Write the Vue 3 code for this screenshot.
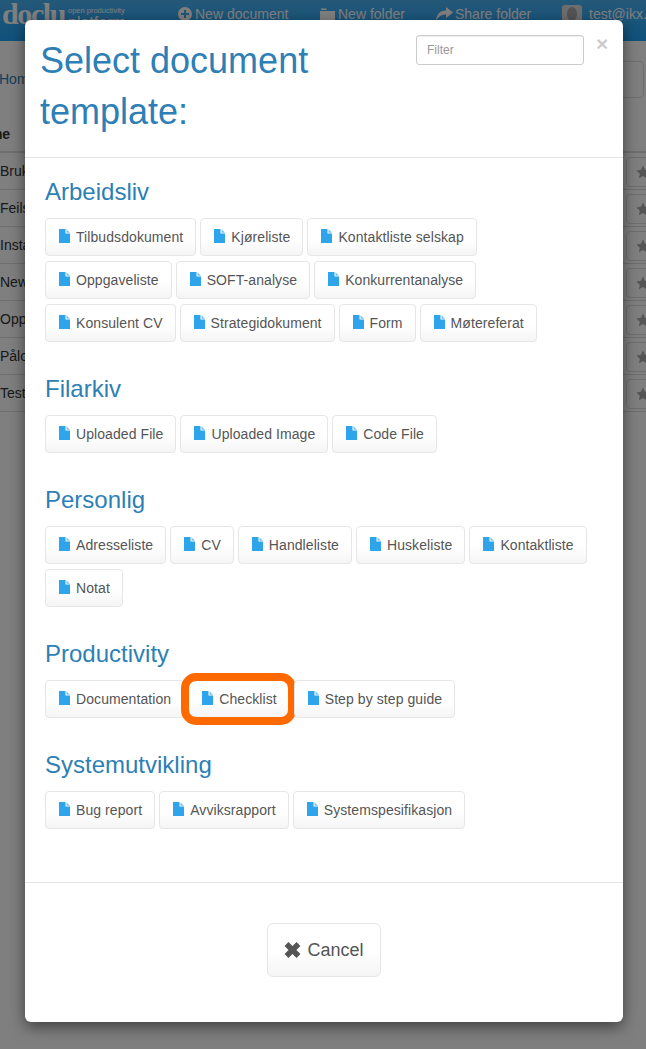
<script setup>
const rows = ['Brukerveiledning', 'Feilsøking', 'Installasjon', 'New document', 'Oppgaver', 'Pålogging', 'Testdokument']
const sections = [
  { title: 'Arbeidsliv', items: ['Tilbudsdokument', 'Kjøreliste', 'Kontaktliste selskap', 'Oppgaveliste', 'SOFT-analyse', 'Konkurrentanalyse', 'Konsulent CV', 'Strategidokument', 'Form', 'Møtereferat'] },
  { title: 'Filarkiv', items: ['Uploaded File', 'Uploaded Image', 'Code File'] },
  { title: 'Personlig', items: ['Adresseliste', 'CV', 'Handleliste', 'Huskeliste', 'Kontaktliste', 'Notat'] },
  { title: 'Productivity', items: ['Documentation', 'Checklist', 'Step by step guide'] },
  { title: 'Systemutvikling', items: ['Bug report', 'Avviksrapport', 'Systemspesifikasjon'] },
]
</script>

<template>
  <div class="root">
    <header class="nav">
      <div class="logo">doclu</div>
      <div class="tag">
        <span class="tag-a">open productivity</span>
        <span class="tag-b">platform</span>
      </div>
      <div class="nav-item first">
        <svg class="nav-ico" width="14" height="14" viewBox="0 0 14 14"><path fill-rule="evenodd" d="M7 0a7 7 0 1 1 0 14A7 7 0 0 1 7 0zM6 3v3H3v2h3v3h2V8h3V6H8V3z" fill="#fff"/></svg>
        <span>New document</span>
      </div>
      <div class="nav-item second">
        <svg class="nav-ico" width="15" height="15" viewBox="0 0 15 15"><path d="M1 1.500h5l1 1.500H1zM0 4h15v11H0z" fill="#fff"/></svg>
        <span>New folder</span>
      </div>
      <div class="nav-item third">
        <svg class="nav-ico" width="17" height="14" viewBox="0 0 17 14"><path d="M10 0l7 5.500L10 11V7.500C5.500 7.500 2.500 9.500 0 14c.5-6.500 4-10.500 10-10.500z" fill="#fff"/></svg>
        <span>Share folder</span>
      </div>
      <div class="nav-item user">
        <div class="avatar">
          <svg width="20" height="23" viewBox="0 0 20 23"><ellipse cx="10" cy="9" rx="5" ry="7" fill="#a8a8a8"/><path d="M2 23c0-5 4-7 8-7s8 2 8 7z" fill="#a8a8a8"/></svg>
        </div>
        <span>test@ikx.org</span>
      </div>
    </header>

    <main class="page">
      <div class="crumbs">
        <a class="home">Home</a>
        <div class="search-box"></div>
      </div>
      <div class="thead"><b class="th">Name</b></div>
      <div v-for="r in rows" :key="r" class="row">
        <span class="cell">{{ r }}</span>
        <span class="star-btn">
          <svg width="14" height="14" viewBox="0 0 24 24"><path d="M12 1l3.400 7.300 7.900 1-5.800 5.500 1.500 7.900L12 18.800l-7 3.900 1.500-7.900L.700 9.300l7.900-1z" fill="#aaa"/></svg>
        </span>
      </div>
    </main>

    <div class="backdrop"></div>

    <section class="modal">
      <div class="m-head">
        <h1 class="m-title">Select document template:</h1>
        <input class="filter" type="text" placeholder="Filter" />
        <span class="close">×</span>
      </div>

      <div class="m-body">
        <div v-for="s in sections" :key="s.title" class="group">
          <h3 class="group-title">{{ s.title }}</h3>
          <div class="btns">
            <button v-for="i in s.items" :key="i" class="doc-btn" :class="{ marked: i === 'Checklist' }" type="button">
              <svg class="doc-ico" width="11" height="14" viewBox="0 0 11 14">
                <path d="M0 0h6.500v4.500H11V14H0z" fill="#2ea5ea"/>
                <path d="M7.500 0.300L11 3.700H7.500z" fill="#7cc3ee"/>
              </svg>
              <span>{{ i }}</span>
            </button>
          </div>
        </div>
      </div>

      <div class="m-foot">
        <button class="cancel" type="button">
          <svg width="17" height="16" viewBox="0 0 16 16"><path d="M2 2l12 12M14 2L2 14" stroke="#555" stroke-width="5.500" fill="none"/></svg>
          <span>Cancel</span>
        </button>
      </div>
    </section>
  </div>
</template>

<style>
html, body { margin: 0; padding: 0; }
body { overflow: hidden; }
</style>

<style scoped>
.root {
  position: relative;
  width: 646px;
  height: 1049px;
  overflow: hidden;
  background: #fff;
  font-family: "Liberation Sans", Arial, sans-serif;
  font-size: 14px;
  line-height: 20px;
  color: #333;
}

/* Page behind the dialog */
.nav {
  display: flex;
  align-items: flex-start;
  height: 41px;
  background: linear-gradient(#4ab0f0, #1ea4fa);
  color: #fff;
  white-space: nowrap;
  overflow: hidden;
}
.logo {
  flex: none;
  margin-left: 2px;
  width: 64px;
  font-family: "Liberation Serif", serif;
  font-weight: 700;
  font-size: 30px;
  line-height: 28px;
  letter-spacing: -1.400px;
  color: #fff;
}
.tag { flex: none; display: flex; flex-direction: column; width: 110px; margin-left: 2px; }
.tag-a { font-size: 7.500px; line-height: 10px; margin-top: 6px; }
.tag-b { font-size: 16px; line-height: 14px; }
.nav-item { flex: none; display: flex; align-items: center; height: 28px; gap: 3px; }
.nav-ico { flex: none; }
.first { width: 142px; }
.second { width: 116px; }
.third { width: 126px; gap: 2px; }
.user { gap: 7px; }
.avatar {
  width: 20px;
  height: 23px;
  margin-top: 5px;
  border-radius: 3px;
  background: #ddd;
  overflow: hidden;
}

.crumbs { display: flex; justify-content: flex-end; height: 37px; margin-top: 20px; position: relative; }
.home { position: absolute; left: -1px; top: 8px; color: #2980b9; }
.search-box {
  width: 60px;
  height: 35px;
  margin-right: 2px;
  border: 1px solid #ddd;
  border-radius: 4px;
}
.thead {
  height: 55px;
  box-sizing: border-box;
  padding-top: 26px;
  border-bottom: 2px solid #ddd;
}
.th { display: block; margin-left: -28px; }
.row {
  display: flex;
  justify-content: space-between;
  height: 37px;
  box-sizing: border-box;
  padding-top: 4px;
  border-bottom: 1px solid #ddd;
}
.cell { line-height: 28px; }
.star-btn {
  display: flex;
  align-items: center;
  width: 40px;
  height: 30px;
  box-sizing: border-box;
  margin-right: -20px;
  padding-left: 9px;
  border: 1px solid #ddd;
  border-radius: 4px;
}

.backdrop {
  position: absolute;
  inset: 0;
  background: rgba(0, 0, 0, .5);
}

/* Dialog */
.modal {
  position: absolute;
  top: 20px;
  left: 25px;
  width: 598px;
  height: 1002px;
  background: #fff;
  border-radius: 6px;
  box-shadow: 0 5px 15px rgba(0, 0, 0, .5);
  display: flex;
  flex-direction: column;
}
.m-head {
  display: flex;
  align-items: flex-start;
  padding: 15px 15px 19px;
  border-bottom: 1px solid #e5e5e5;
}
.m-title {
  flex: 1;
  margin: 0;
  padding-right: 60px;
  font-size: 36px;
  font-weight: 400;
  line-height: 51.400px;
  color: #2d7fb5;
}
.filter {
  flex: none;
  width: 168px;
  height: 30px;
  box-sizing: border-box;
  padding: 5px 10px;
  border: 1px solid #ccc;
  border-radius: 3px;
  font: 12px/18px "Liberation Sans", Arial, sans-serif;
  color: #555;
  background: #fff;
  box-shadow: inset 0 1px 1px rgba(0, 0, 0, .075);
  outline: none;
}
.filter::placeholder { color: #999; opacity: 1; }
.close {
  flex: none;
  width: 12px;
  margin-left: 12px;
  font-size: 21px;
  font-weight: 700;
  line-height: 17px;
  color: #000;
  opacity: .2;
  text-shadow: 0 1px 0 #fff;
}
.m-body { flex: 1; padding: 20px 20px 0; }
.group { margin-bottom: 33px; }
.group-title {
  margin: 0 0 13px;
  padding-top: 1px;
  font-size: 24px;
  font-weight: 400;
  line-height: 26px;
  color: #2d7fb5;
}
.btns { display: flex; flex-wrap: wrap; gap: 5px 4px; }
.doc-btn {
  position: relative;
  display: inline-flex;
  align-items: center;
  gap: 6px;
  height: 38px;
  box-sizing: border-box;
  padding: 0 12px 0 13px;
  border: 1px solid #e6e6e6;
  border-radius: 4px;
  background: linear-gradient(#fff, #fff 55%, #f5f5f5);
  font: 14px/20px "Liberation Sans", Arial, sans-serif;
  letter-spacing: .08px;
  color: #555;
}
.doc-ico { flex: none; margin-bottom: 2px; }
.marked::after {
  content: "";
  position: absolute;
  inset: -8px -7px -8px -8px;
  border: 8px solid #ff6a00;
  border-radius: 15px;
  pointer-events: none;
}
.m-foot {
  display: flex;
  justify-content: center;
  height: 140px;
  box-sizing: border-box;
  padding-top: 40px;
  border-top: 1px solid #e5e5e5;
}
.cancel {
  display: inline-flex;
  align-items: center;
  justify-content: center;
  gap: 6px;
  width: 114px;
  height: 54px;
  box-sizing: border-box;
  padding: 0;
  border: 1px solid #e6e6e6;
  border-radius: 6px;
  background: linear-gradient(#fff, #fff 55%, #f5f5f5);
  font: 18px/24px "Liberation Sans", Arial, sans-serif;
  color: #555;
}
</style>
